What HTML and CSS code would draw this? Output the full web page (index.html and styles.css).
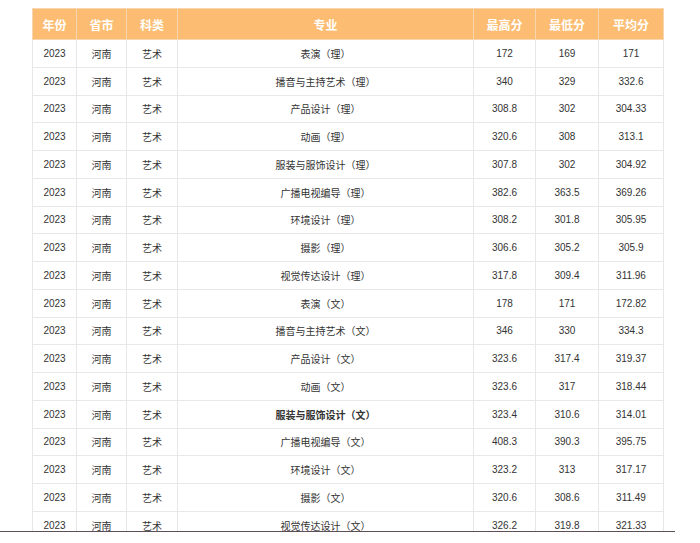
FILE: index.html
```html
<!DOCTYPE html>
<html lang="zh">
<head>
<meta charset="utf-8">
<link rel="stylesheet" href="styles.css">
</head>
<body>
<div class="frame">
  <table class="scores">
    <colgroup>
      <col class="c-year"><col class="c-prov"><col class="c-type"><col class="c-major"><col class="c-max"><col class="c-min"><col class="c-avg">
    </colgroup>
    <thead>
      <tr><th>年份</th><th>省市</th><th>科类</th><th>专业</th><th>最高分</th><th>最低分</th><th>平均分</th></tr>
    </thead>
    <tbody>
      <tr><td>2023</td><td>河南</td><td>艺术</td><td>表演（理）</td><td>172</td><td>169</td><td>171</td></tr>
      <tr><td>2023</td><td>河南</td><td>艺术</td><td>播音与主持艺术（理）</td><td>340</td><td>329</td><td>332.6</td></tr>
      <tr><td>2023</td><td>河南</td><td>艺术</td><td>产品设计（理）</td><td>308.8</td><td>302</td><td>304.33</td></tr>
      <tr><td>2023</td><td>河南</td><td>艺术</td><td>动画（理）</td><td>320.6</td><td>308</td><td>313.1</td></tr>
      <tr><td>2023</td><td>河南</td><td>艺术</td><td>服装与服饰设计（理）</td><td>307.8</td><td>302</td><td>304.92</td></tr>
      <tr><td>2023</td><td>河南</td><td>艺术</td><td>广播电视编导（理）</td><td>382.6</td><td>363.5</td><td>369.26</td></tr>
      <tr><td>2023</td><td>河南</td><td>艺术</td><td>环境设计（理）</td><td>308.2</td><td>301.8</td><td>305.95</td></tr>
      <tr><td>2023</td><td>河南</td><td>艺术</td><td>摄影（理）</td><td>306.6</td><td>305.2</td><td>305.9</td></tr>
      <tr><td>2023</td><td>河南</td><td>艺术</td><td>视觉传达设计（理）</td><td>317.8</td><td>309.4</td><td>311.96</td></tr>
      <tr><td>2023</td><td>河南</td><td>艺术</td><td>表演（文）</td><td>178</td><td>171</td><td>172.82</td></tr>
      <tr><td>2023</td><td>河南</td><td>艺术</td><td>播音与主持艺术（文）</td><td>346</td><td>330</td><td>334.3</td></tr>
      <tr><td>2023</td><td>河南</td><td>艺术</td><td>产品设计（文）</td><td>323.6</td><td>317.4</td><td>319.37</td></tr>
      <tr><td>2023</td><td>河南</td><td>艺术</td><td>动画（文）</td><td>323.6</td><td>317</td><td>318.44</td></tr>
      <tr><td>2023</td><td>河南</td><td>艺术</td><td class="strong">服装与服饰设计（文）</td><td>323.4</td><td>310.6</td><td>314.01</td></tr>
      <tr><td>2023</td><td>河南</td><td>艺术</td><td>广播电视编导（文）</td><td>408.3</td><td>390.3</td><td>395.75</td></tr>
      <tr><td>2023</td><td>河南</td><td>艺术</td><td>环境设计（文）</td><td>323.2</td><td>313</td><td>317.17</td></tr>
      <tr><td>2023</td><td>河南</td><td>艺术</td><td>摄影（文）</td><td>320.6</td><td>308.6</td><td>311.49</td></tr>
      <tr><td>2023</td><td>河南</td><td>艺术</td><td>视觉传达设计（文）</td><td>326.2</td><td>319.8</td><td>321.33</td></tr>
    </tbody>
  </table>
</div>
</body>
</html>
```

FILE: styles.css
```css
html, body {
  margin: 0;
  padding: 0;
  background: #ffffff;
}

.frame {
  width: 675px;
  height: 532px;
  overflow: hidden;
  border-bottom: 1px solid #5e4e58;
  padding-top: 8px;
  padding-left: 32px;
  box-sizing: border-box;
}

.scores {
  border-collapse: collapse;
  table-layout: fixed;
  width: 631px;
  font-family: "Liberation Sans", "Noto Sans CJK SC", sans-serif;
  font-size: 10px;
  color: #333333;
}

.c-year { width: 44px; }
.c-prov { width: 50px; }
.c-type { width: 51px; }
.c-major { width: 296px; }
.c-max { width: 62px; }
.c-min { width: 63px; }
.c-avg { width: 65px; }

.scores th {
  background: #fcbd72;
  color: #ffffff;
  font-family: "Noto Sans CJK SC", sans-serif;
  font-weight: 700;
  font-size: 12px;
  height: 31px;
  padding: 0;
  border: 1px solid #f9d7ae;
  text-align: center;
  box-sizing: border-box;
}

.scores td {
  height: 27.75px;
  padding: 0;
  border: 1px solid #e8e8e8;
  text-align: center;
  box-sizing: border-box;
  white-space: nowrap;
}

.scores td.strong {
  font-weight: 700;
}
```
